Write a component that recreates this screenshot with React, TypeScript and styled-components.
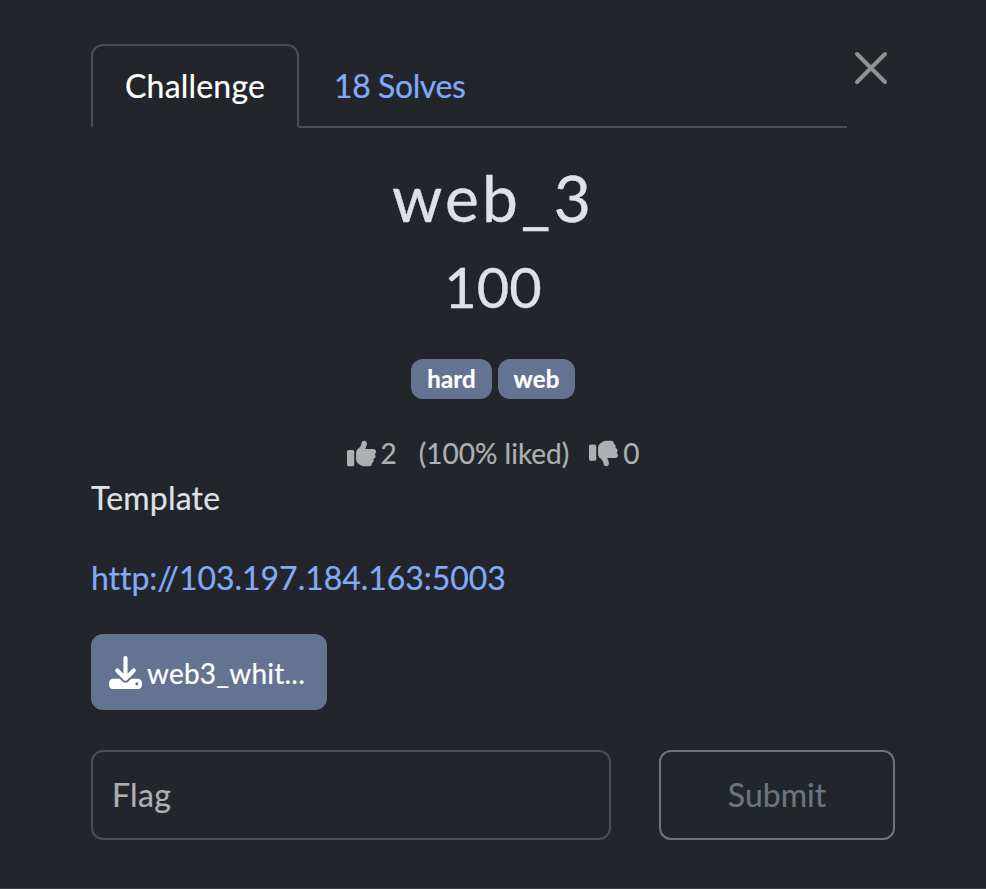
import React from 'react';
import styled, { createGlobalStyle } from 'styled-components';
import { FaThumbsUp, FaThumbsDown, FaDownload } from 'react-icons/fa6';

const Global = createGlobalStyle`
  *{box-sizing:border-box}
  body{margin:0;background:#22252a;color:#dee2e6;font-family:Lato,sans-serif;font-size:32px;line-height:48px;font-variant-ligatures:none;-webkit-text-stroke:.2px currentColor}
`;
const Modal = styled.main`
  width:986px;height:889px;padding:44px 91px 0;display:flex;flex-direction:column;
  border-bottom:1px solid #383b3f;
`;
const Header = styled.header`display:flex;align-items:flex-start;height:84px;`;
const Tabs = styled.nav`display:flex;width:756px;height:84px;border-bottom:2px solid #4b4e53;`;
const Tab = styled.a<{ $active?: boolean }>`
  height:84px;padding:${p => (p.$active ? '16px 0 0 32px' : '18px 35px')};border-radius:12px 12px 0 0;
  width:${p => (p.$active ? '208px' : 'auto')};
  border:${p => (p.$active ? '2px solid #4b4e53' : '0')};
  border-bottom:${p => (p.$active ? '2px solid #22252a' : '0')};
  color:${p => (p.$active ? '#fff' : '#83a9f7')};
  letter-spacing:${p => (p.$active ? '.2px' : '-.4px')};
`;
const Close = styled.svg`width:34px;height:34px;margin:7px 0 0 7px;`;
const Title = styled.h2`margin:32px 0 0;text-align:center;font-weight:400;font-size:64px;line-height:76px;letter-spacing:3.2px;-webkit-text-stroke-width:.4px;`;
const Points = styled.h3`margin:17px 0 0;text-align:center;font-weight:400;font-size:56px;line-height:68px;-webkit-text-stroke-width:.3px;`;
const Tags = styled.div`display:flex;justify-content:center;gap:6px;margin-top:38px;`;
const Tag = styled.span<{ $width: number }>`
  width:${p => p.$width}px;height:40px;border-radius:12px;background:#637391;color:#fff;
  font-size:24px;font-weight:700;line-height:40px;text-align:center;letter-spacing:.1px;
`;
const Votes = styled.div`
  display:flex;justify-content:center;align-items:center;height:42px;margin-top:33px;font-size:28px;color:#adb0b3;
  svg{width:29px;height:29px;margin-right:5px;stroke:none}
`;
const Ratio = styled.span`margin:0 20px 0 22px;`;
const Text = styled.p<{ $spacing?: number }>`margin:0 0 32px;letter-spacing:${p => p.$spacing ?? 0}px;`;
const Link = styled.a`color:#83a9f7;`;
const FileButton = styled.button`
  width:236px;height:76px;border:0;border-radius:12px;background:#637391;color:#fff;display:flex;align-items:center;
  padding:2px 17px 0 18px;gap:5px;font:28px Lato,sans-serif;letter-spacing:.2px;
  svg{width:33px;height:33px;flex:none;margin-top:-2px}
`;
const Form = styled.form`display:flex;gap:48px;margin-top:40px;`;
const Input = styled.input`
  width:520px;height:90px;padding:0 19px 2px;border:2px solid #4b4e53;border-radius:12px;background:transparent;
  color:#dee2e6;font:32px Lato,sans-serif;letter-spacing:.3px;
  &::placeholder{color:#adb0b3;opacity:1}
`;
const Submit = styled.button`width:236px;height:90px;padding:0 6px 2px;border:2px solid #6c757d;border-radius:12px;background:transparent;color:#6c757d;font:32px Lato,sans-serif;`;

export default function App() {
  return (
    <>
      <Global />
      <Modal>
        <Header>
          <Tabs><Tab $active>Challenge</Tab><Tab>18 Solves</Tab></Tabs>
          <Close viewBox="0 0 34 34"><path d="M3 3l28 28M31 3L3 31" stroke="#909294" strokeWidth="4" strokeLinecap="round" /></Close>
        </Header>
        <Title>web_3</Title>
        <Points>100</Points>
        <Tags><Tag $width={81}>hard</Tag><Tag $width={77}>web</Tag></Tags>
        <Votes><FaThumbsUp />2<Ratio>(100% liked)</Ratio><FaThumbsDown />0</Votes>
        <Text $spacing={0.2}>Template</Text>
        <Text $spacing={-0.04}><Link>http://103.197.184.163:5003</Link></Text>
        <FileButton><FaDownload />web3_whit...</FileButton>
        <Form><Input placeholder="Flag" /><Submit type="button">Submit</Submit></Form>
      </Modal>
    </>
  );
}
